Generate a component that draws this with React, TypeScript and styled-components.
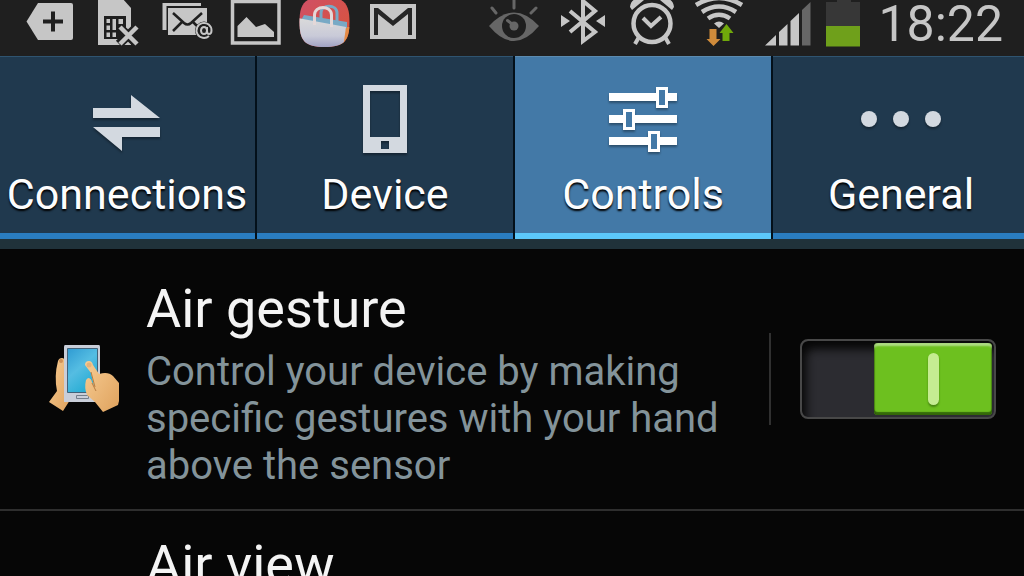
import React, { useState } from "react";
import type { ReactNode } from "react";
import styled, { createGlobalStyle } from "styled-components";

const GlobalStyle = createGlobalStyle`
  *, *::before, *::after { box-sizing: border-box; }
  body {
    margin: 0;
    background: #060606;
    color: #f4f4f4;
    font-family: Roboto, "Liberation Sans", sans-serif;
    overflow: hidden;
  }
`;

const Screen = styled.div`
  min-height: 100vh;
  background: #060606;
`;

const StatusBar = styled.header`
  display: flex;
  justify-content: space-between;
  height: 56px;
  padding: 0 21px 0 22px;
  background: #1f1f1f;
  color: #c6c6c6;
`;

const StatusGroup = styled.div`
  display: flex;
  gap: 16px;
`;

const StatusSvg = styled.svg`
  display: block;
  flex: none;
  height: 56px;
  overflow: visible;
`;

const Clock = styled.time`
  font-size: 50px;
  line-height: 48px;
  font-weight: 400;
`;

const TabBar = styled.nav`
  overflow: hidden;
  background: #20323a;
  padding-bottom: 10px;
`;

const TabList = styled.div`
  display: grid;
  grid-template-columns: repeat(4, minmax(0, 1fr));
  margin: 0 -7px 0 -1px;
`;

const Tab = styled.button<{ $active: boolean }>`
  display: flex;
  flex-direction: column;
  align-items: center;
  gap: 14px;
  padding: 27px 0 20px;
  border: 0;
  border-right: 2px solid #03101a;
  background: ${(p) => (p.$active ? "#4379a7" : "#20394e")};
  box-shadow: inset 0 1px 0 ${(p) => (p.$active ? "#5c8bb0" : "#2f5470")},
    inset 0 -6px 0 ${(p) => (p.$active ? "#5cc8fa" : "#2a7dc0")};
  color: ${(p) => (p.$active ? "#ffffff" : "#d3d9e0")};
  font-family: inherit;
`;

const TabSvg = styled.svg`
  display: block;
  width: 84px;
  height: 72px;
  filter: drop-shadow(0 2px 1px rgba(0, 0, 0, 0.35));
`;

const TabLabel = styled.span`
  color: #fdfdfd;
  font-size: 43px;
  line-height: 50px;
  white-space: nowrap;
  text-shadow: 0 2px 2px #000;
`;

const SettingsList = styled.main``;

const SettingRow = styled.section`
  display: flex;
  align-items: center;
  gap: 26px;
  padding: 0 28px 0 48px;
  border-bottom: 2px solid #2e2e2e;
`;

const RowIcon = styled.div`
  flex: none;
  width: 72px;
`;

const RowSvg = styled.svg`
  display: block;
  width: 72px;
  height: 68px;
`;

const RowText = styled.div<{ $compact?: boolean }>`
  flex: 1;
  min-width: 0;
  padding: ${(p) => (p.$compact ? "22px 0" : "28px 0 20px")};
`;

const RowTitle = styled.h2`
  margin: 0;
  font-size: 54px;
  line-height: 64px;
  font-weight: 400;
`;

const RowSummary = styled.p`
  margin: 7px 0 0;
  max-width: 600px;
  color: #83939a;
  font-size: 40px;
  line-height: 47px;
`;

const SwitchArea = styled.div`
  display: flex;
  align-items: center;
  flex: none;
  height: 92px;
  padding-left: 29px;
  border-left: 2px solid #303030;
`;

const SwitchTrack = styled.label`
  display: flex;
  position: relative;
  width: 196px;
  height: 80px;
  padding: 2px;
  border: 2px solid #484848;
  border-radius: 8px;
  background: #2c2c31;
  box-shadow: inset 6px 10px 10px -2px #070707;
`;

const SwitchInput = styled.input`
  position: absolute;
  inset: 0;
  margin: 0;
  width: 100%;
  height: 100%;
  opacity: 0;
  cursor: pointer;
`;

const SwitchThumb = styled.span<{ $on: boolean }>`
  display: flex;
  align-items: center;
  justify-content: center;
  width: 118px;
  height: 72px;
  margin-left: ${(p) => (p.$on ? "auto" : "0")};
  border-radius: 4px;
  background: ${(p) => (p.$on ? "#6dc01f" : "#6b6b70")};
  box-shadow: inset 0 4px 2px -1px rgba(255, 255, 255, 0.45),
    inset 0 -3px 1px rgba(30, 70, 0, 0.7), inset 1px 0 1px #478511,
    inset -1px 0 1px #478511;

  &::after {
    content: "";
    width: 11px;
    height: 52px;
    border-radius: 6px;
    background: #c5ec92;
    box-shadow: 0 2px 2px #478511;
  }
`;

function StatusIcon({ x, width = 53, label, children }: {
  x: number; width?: number; label: string; children: ReactNode;
}) {
  return (
    <StatusSvg width={width} viewBox={`${x} 0 ${width} 56`} fill="none" role="img" aria-label={label}>
      {children}
    </StatusSvg>
  );
}

function StatusIcons() {
  return (
    <StatusGroup>
      <StatusIcon x={22} label="New item">
        <path fill="currentColor" d="M38 3H71Q73 3 73 5V38Q73 40 71 40H38L26.500 21.500Z" />
        <path stroke="#1f1f1f" strokeWidth="4" d="M53 11.500V31.500M43 21.500H63" />
      </StatusIcon>
      <StatusIcon x={91} label="No SIM card">
        <path fill="currentColor" d="M98-2H122L131 8V45H98Z" />
        <path fill="#1f1f1f" d="M104 16H126V39H104Z" />
        <path fill="currentColor" d="M106.500 19H110V23H106.500ZM106.500 25.500H110V30H106.500ZM106.500 32.500H110V37H106.500ZM112.500 19H116V30H112.500ZM112.500 32.500H116V37H112.500ZM118.500 19H123V24H118.500Z" />
        <path stroke="#1f1f1f" strokeWidth="9" d="M119 27L137 44M137 27L119 44" />
        <path stroke="currentColor" strokeWidth="4.500" d="M120 27L137 44M137 27L120 44" />
      </StatusIcon>
      <StatusIcon x={160} label="Email">
        <path fill="currentColor" d="M162.500 3H201V6H166.500V30H162.500Z" />
        <path fill="currentColor" d="M168 8H207V35H168Z" />
        <path stroke="#1f1f1f" strokeWidth="2.500" d="M173 13L184 23Q187.500 26 191 23L202 13M173 31L182 22M202 31L193 22" />
        <circle cx="204" cy="30.500" r="9" fill="#1f1f1f" />
        <path stroke="currentColor" strokeWidth="2" d="M209 36A7.500 7.500 0 1 1 211.500 30.500Q211.500 34 209 34Q207 34 207 31V27M207 30.500A3 3.500 0 1 1 201 30.500A3 3.500 0 1 1 207 30.500" />
      </StatusIcon>
      <StatusIcon x={229} label="Screenshot">
        <path stroke="currentColor" strokeWidth="3.500" d="M232.500 1.500H279V43H232.500Z" />
        <path fill="currentColor" d="M237.500 37V26L246.500 17L256 27L265 24L274 32V37Z" />
      </StatusIcon>
      <StatusIcon x={298} label="Samsung Apps">
        <defs>
          <linearGradient id="storeTop" x1="0" y1="0" x2="1" y2="1">
            <stop offset="0" stopColor="#cf5068" /><stop offset="1" stopColor="#d95436" />
          </linearGradient>
          <linearGradient id="storeBag" x1="0" y1="0" x2="0" y2="1">
            <stop offset="0" stopColor="#dadada" /><stop offset=".6" stopColor="#c9cad8" /><stop offset="1" stopColor="#9d9fc2" />
          </linearGradient>
          <clipPath id="storeClip"><path d="M324.500-3C344-3 349.500 3 349.500 22S344 47 324.500 47S299.500 41 299.500 22S305-3 324.500-3Z" /></clipPath>
        </defs>
        <g clipPath="url(#storeClip)">
          <path fill="url(#storeTop)" d="M298-3H350V48H298Z" />
          <path fill="#e48b47" d="M343 27H350V48H338Z" />
          <path fill="#78a9c5" d="M304 15L347 22V28L300 22Z" />
          <path stroke="#78a9c5" strokeWidth="3" d="M321 19V13C321 4 337 4 337 13V25" />
          <path fill="url(#storeBag)" d="M298 18L346 27L343 48H298Z" />
          <path stroke="#e4d8d8" strokeWidth="3" d="M314.500 25V15C314.500 5 331.500 5 331.500 15V27" />
        </g>
      </StatusIcon>
      <StatusIcon x={367} label="Gmail">
        <path fill="currentColor" d="M370 4H416V39H370Z" />
        <path fill="#262626" d="M374 8H378L393 20.500L408 8H412V35H408V14L393 26L378 14V35H374Z" />
      </StatusIcon>
    </StatusGroup>
  );
}

function SystemIcons() {
  return (
    <StatusGroup>
      <StatusIcon x={488} label="Smart stay">
        <path fill="#666" d="M490 26Q515-1 540 26Q515 56 490 26Z" />
        <circle cx="515" cy="26" r="12" fill="#1f1f1f" />
        <circle cx="515" cy="26" r="4.500" fill="#666" />
        <path stroke="#666" strokeWidth="3" strokeLinecap="round" d="M508.500 20.500L513 24M515 0V8M493 8L497 13M537 8L532 13" />
      </StatusIcon>
      <StatusIcon x={557} label="Bluetooth">
        <path stroke="currentColor" strokeWidth="4" d="M571 11L596 32L584 41V1L596 11L571 32" />
        <path fill="currentColor" d="M562 15L571 21L562 27ZM606 15L597 21L606 27Z" />
      </StatusIcon>
      <StatusIcon x={626} label="Alarm set">
        <circle cx="653" cy="23.500" r="18.500" stroke="currentColor" strokeWidth="4.500" />
        <path stroke="currentColor" strokeWidth="4" d="M644 18L652 26L662 17M640 37L636 44M666 37L670 44" />
        <path fill="currentColor" d="M631 7Q632-2 642-2L645 0L633 10ZM675 7Q674-2 664-2L661 0L673 10Z" />
      </StatusIcon>
      <StatusIcon x={695} label="Wi-Fi connected">
        <path stroke="currentColor" strokeWidth="4.500" d="M697 5Q720-9 743 5M703 12Q720 1 737 12M709 18.500Q720 11 731 18.500" />
        <path fill="currentColor" d="M715 23.500Q720 19.500 725 23.500L720 28Z" />
        <path fill="#cf8b3b" d="M710.500 29H717.500V39H721.500L714.500 46L707.500 39H710.500Z" />
        <path fill="#70a80b" d="M723.500 41H730.500V33H734.500L727.500 24L720.500 33H723.500Z" />
      </StatusIcon>
      <StatusIcon x={764} width={47} label="Signal strength">
        <path fill="currentColor" d="M766 45.500L777 35V45.500ZM780 32L788.500 24V45.500H780ZM791.500 21L800 13V45.500H791.500Z" />
        <path fill="#666" d="M803 10L811.500 2V45.500H803Z" />
      </StatusIcon>
      <StatusIcon x={827} width={36} label="Battery 45 percent">
        <path fill="#373737" d="M827 2H838V0H852V2H861V26H827Z" />
        <path fill="#6fa01b" d="M827 26H861V46.500H827Z" />
      </StatusIcon>
      <Clock dateTime="18:22">18:22</Clock>
    </StatusGroup>
  );
}

const tabs = [
  {
    name: "Connections",
    icon: <path fill="currentColor" d="M8 25H46V12L75 35H8ZM75 44V54H37V68L8 44Z" />,
  },
  {
    name: "Device",
    icon: <path fill="currentColor" fillRule="evenodd" d="M20 2H64V70H20ZM27 8V54H57V8ZM38 58V66H46V58Z" />,
  },
  {
    name: "Controls",
    icon: (
      <>
        <path stroke="currentColor" strokeWidth="8" d="M8 14H76M8 36H76M8 58H76" />
        <path fill="#4379a7" stroke="currentColor" strokeWidth="3" d="M56.500 5.500H65.500V23.500H56.500ZM23.500 27.500H32.500V45.500H23.500ZM48.500 49.500H57.500V67.500H48.500Z" />
      </>
    ),
  },
  {
    name: "General",
    icon: (
      <g fill="currentColor">
        <circle cx="10" cy="36" r="8" /><circle cx="42" cy="36" r="8" /><circle cx="74" cy="36" r="8" />
      </g>
    ),
  },
];

function GestureIcon() {
  return (
    <RowSvg viewBox="48 345 72 68" fill="none" aria-hidden="true">
      <defs>
        <linearGradient id="phone" x1="0" y1="0" x2="0.6" y2="1">
          <stop offset="0" stopColor="#2f9bd3" /><stop offset=".5" stopColor="#55bde2" /><stop offset="1" stopColor="#25acd3" />
        </linearGradient>
        <linearGradient id="skin" x1="0" y1="0" x2="1" y2="1">
          <stop offset="0" stopColor="#f7cc93" /><stop offset="1" stopColor="#dfa25d" />
        </linearGradient>
      </defs>
      <path fill="url(#skin)" d="M58 361Q59 358 62 358Q65 358 65 363V391L70 400L63 411L49 402L57 391Q54 376 58 361Z" />
      <path fill="#c9ced9" d="M65 345H99Q100 345 100 347V402H64V347Q64 345 65 345Z" />
      <path fill="url(#phone)" stroke="#426279" d="M67.500 348.500H97.500V392.500H67.500Z" />
      <path stroke="#747f8c" d="M76.500 395.500H88.500V398.500H76.500Z" />
      <path fill="url(#skin)" d="M85 365Q85 361 89 361Q92 361 93 365L99 374Q108 371 113 376L119 383V401L118 405L103 412L95 402L87 395Q84 388 86 380L88 378Q91 378 92 382L94 386L91 373Z" />
      <path stroke="#b77d42" d="M91 372L95 387M92 383L96 391" />
      <circle cx="61" cy="361" r="2" fill="#ce8f56" />
      <circle cx="89" cy="365" r="2.500" fill="#e5b27a" />
    </RowSvg>
  );
}

export default function App() {
  const [active, setActive] = useState("Controls");
  const [airGesture, setAirGesture] = useState(true);
  return (
    <Screen>
      <GlobalStyle />
      <StatusBar>
        <StatusIcons />
        <SystemIcons />
      </StatusBar>
      <TabBar aria-label="Settings">
        <TabList role="tablist">
          {tabs.map((tab) => (
            <Tab
              key={tab.name}
              type="button"
              role="tab"
              aria-selected={active === tab.name}
              $active={active === tab.name}
              onClick={() => setActive(tab.name)}
            >
              <TabSvg viewBox="0 0 84 72" fill="none" aria-hidden="true">{tab.icon}</TabSvg>
              <TabLabel>{tab.name}</TabLabel>
            </Tab>
          ))}
        </TabList>
      </TabBar>
      <SettingsList>
        <SettingRow>
          <RowIcon><GestureIcon /></RowIcon>
          <RowText>
            <RowTitle id="air-gesture">Air gesture</RowTitle>
            <RowSummary>
              Control your device by making specific gestures with your hand above the sensor
            </RowSummary>
          </RowText>
          <SwitchArea>
            <SwitchTrack>
              <SwitchInput
                type="checkbox"
                aria-labelledby="air-gesture"
                checked={airGesture}
                onChange={(e) => setAirGesture(e.target.checked)}
              />
              <SwitchThumb $on={airGesture} />
            </SwitchTrack>
          </SwitchArea>
        </SettingRow>
        <SettingRow>
          <RowIcon />
          <RowText $compact>
            <RowTitle>Air view</RowTitle>
          </RowText>
        </SettingRow>
      </SettingsList>
    </Screen>
  );
}
